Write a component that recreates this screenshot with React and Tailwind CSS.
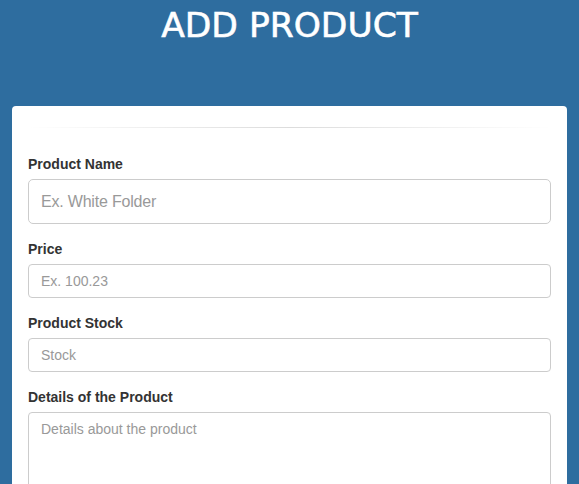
import React from 'react';

const Field = ({ label, children }) => (
  <div className="mb-[15px]">
    <label className="block mb-[5px] text-[14px] leading-[20px] font-bold text-[#333]">{label}</label>
    {children}
  </div>
);

const inputCls =
  'block w-full h-[34px] px-[12px] border border-[#ccc] rounded-[4px] bg-white text-[14px] text-[#555] placeholder:text-[#999] outline-none';

const App = () => {
  return (
    <div className="min-h-screen bg-[#2e6d9f]" style={{ fontFamily: '"Liberation Sans", Arial, sans-serif' }}>
      <h1
        className="pt-[5px] text-center text-white text-[34.5px] leading-[40px] font-normal [-webkit-text-stroke:0.6px_white]"
        style={{ fontFamily: '"DejaVu Sans", sans-serif' }}
      >
        ADD PRODUCT
      </h1>
      <div className="mx-[12px] mt-[61px] bg-white rounded-[4px] px-[16px] pt-[21px] pb-[30px]">
        <div className="h-px bg-linear-to-r from-transparent via-[#dcdcdc] to-transparent mb-[26px]" />
        <form>
          <Field label="Product Name">
            <input
              className="block w-full h-[45px] px-[12px] border border-[#ccc] rounded-[5px] bg-white text-[16px] tracking-[-0.2px] text-[#555] placeholder:text-[#999] outline-none"
              placeholder="Ex. White Folder"
            />
          </Field>
          <Field label="Price">
            <input className={inputCls} placeholder="Ex. 100.23" />
          </Field>
          <Field label="Product Stock">
            <input className={inputCls} placeholder="Stock" />
          </Field>
          <Field label="Details of the Product">
            <textarea
              className="block w-full h-[120px] px-[12px] py-[6px] border border-[#ccc] rounded-[4px] bg-white text-[14px] leading-[20px] text-[#555] placeholder:text-[#999] outline-none resize-none"
              placeholder="Details about the product"
            />
          </Field>
        </form>
      </div>
    </div>
  );
};

export default App;
